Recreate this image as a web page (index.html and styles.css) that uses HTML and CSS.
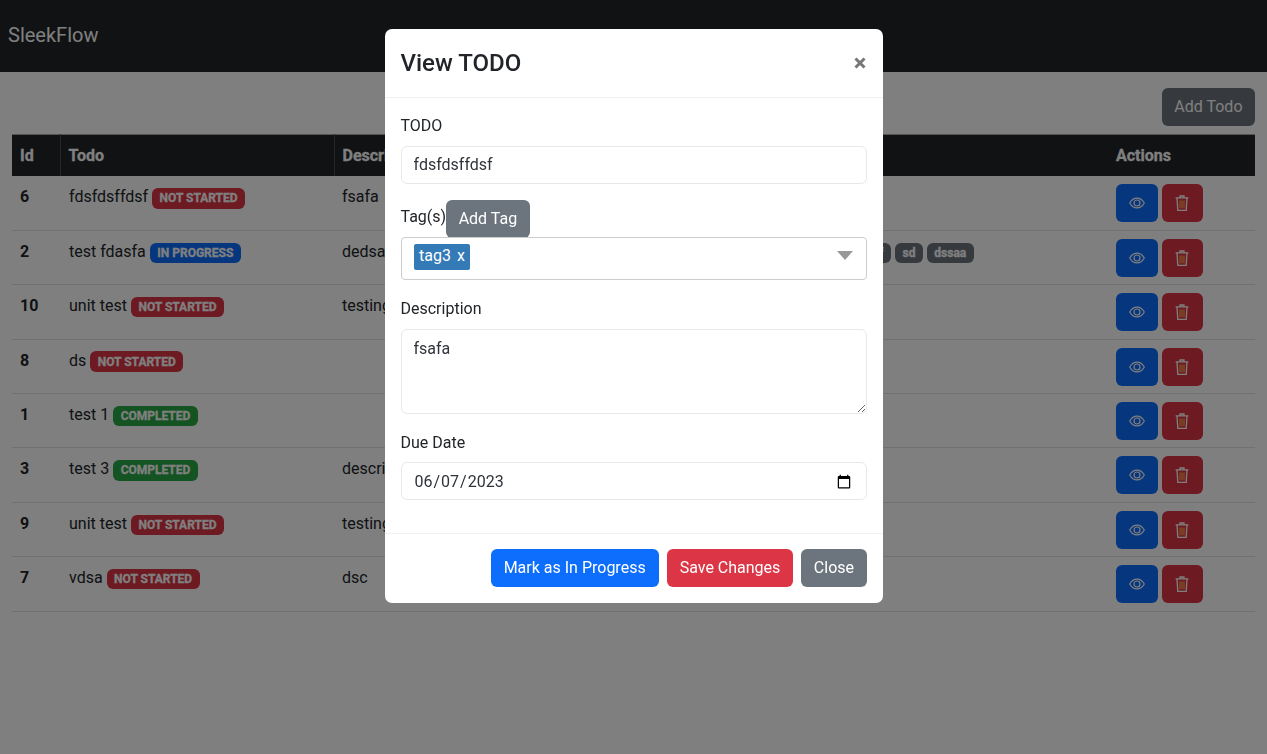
FILE: index.html
```html
<!DOCTYPE html>
<html lang="en">
<head>
  <meta charset="UTF-8" />
  <meta name="viewport" content="width=device-width, initial-scale=1.0" />
  <title>SleekFlow</title>
  <link rel="stylesheet" href="styles.css">
</head>
<body>
  <nav class="navbar"><span class="brand">SleekFlow</span></nav>

  <main class="container">
    <div class="toolbar"><button class="btn btn-gray">Add Todo</button></div>

    <table class="todos">
      <colgroup>
        <col class="col-id"><col class="col-todo"><col class="col-desc"><col class="col-tags"><col class="col-actions">
      </colgroup>
      <thead>
        <tr><th>Id</th><th>Todo</th><th>Description</th><th>Tags</th><th>Actions</th></tr>
      </thead>
      <tbody>
        <tr>
          <td class="num">6</td>
          <td class="name">fdsfdsffdsf <span class="badge red">Not Started</span></td>
          <td>fsafa</td>
          <td><span class="badge gray tag">tag3</span></td>
          <td class="actions">
            <button class="btn btn-blue icon-btn"><svg class="ico-eye" viewBox="0 0 16 12"><use href="#eye"/></svg></button>
            <button class="btn btn-red icon-btn"><svg class="ico-trash" viewBox="0 0 14 16"><use href="#trash"/></svg></button>
          </td>
        </tr>
        <tr>
          <td class="num">2</td>
          <td class="name">test fdasfa <span class="badge blue">In Progress</span></td>
          <td>dedsa</td>
          <td>
            <span class="badge gray tag">tag3</span>
            <span class="badge gray tag">fdsaf</span>
            <span class="badge gray tag">sd</span>
            <span class="badge gray tag">dssaa</span>
          </td>
          <td class="actions">
            <button class="btn btn-blue icon-btn"><svg class="ico-eye" viewBox="0 0 16 12"><use href="#eye"/></svg></button>
            <button class="btn btn-red icon-btn"><svg class="ico-trash" viewBox="0 0 14 16"><use href="#trash"/></svg></button>
          </td>
        </tr>
        <tr>
          <td class="num">10</td>
          <td class="name">unit test <span class="badge red">Not Started</span></td>
          <td>testing</td>
          <td></td>
          <td class="actions">
            <button class="btn btn-blue icon-btn"><svg class="ico-eye" viewBox="0 0 16 12"><use href="#eye"/></svg></button>
            <button class="btn btn-red icon-btn"><svg class="ico-trash" viewBox="0 0 14 16"><use href="#trash"/></svg></button>
          </td>
        </tr>
        <tr>
          <td class="num">8</td>
          <td class="name">ds <span class="badge red">Not Started</span></td>
          <td></td>
          <td></td>
          <td class="actions">
            <button class="btn btn-blue icon-btn"><svg class="ico-eye" viewBox="0 0 16 12"><use href="#eye"/></svg></button>
            <button class="btn btn-red icon-btn"><svg class="ico-trash" viewBox="0 0 14 16"><use href="#trash"/></svg></button>
          </td>
        </tr>
        <tr>
          <td class="num">1</td>
          <td class="name">test 1 <span class="badge green">Completed</span></td>
          <td></td>
          <td></td>
          <td class="actions">
            <button class="btn btn-blue icon-btn"><svg class="ico-eye" viewBox="0 0 16 12"><use href="#eye"/></svg></button>
            <button class="btn btn-red icon-btn"><svg class="ico-trash" viewBox="0 0 14 16"><use href="#trash"/></svg></button>
          </td>
        </tr>
        <tr>
          <td class="num">3</td>
          <td class="name">test 3 <span class="badge green">Completed</span></td>
          <td>description</td>
          <td></td>
          <td class="actions">
            <button class="btn btn-blue icon-btn"><svg class="ico-eye" viewBox="0 0 16 12"><use href="#eye"/></svg></button>
            <button class="btn btn-red icon-btn"><svg class="ico-trash" viewBox="0 0 14 16"><use href="#trash"/></svg></button>
          </td>
        </tr>
        <tr>
          <td class="num">9</td>
          <td class="name">unit test <span class="badge red">Not Started</span></td>
          <td>testing</td>
          <td></td>
          <td class="actions">
            <button class="btn btn-blue icon-btn"><svg class="ico-eye" viewBox="0 0 16 12"><use href="#eye"/></svg></button>
            <button class="btn btn-red icon-btn"><svg class="ico-trash" viewBox="0 0 14 16"><use href="#trash"/></svg></button>
          </td>
        </tr>
        <tr>
          <td class="num">7</td>
          <td class="name">vdsa <span class="badge red">Not Started</span></td>
          <td>dsc</td>
          <td></td>
          <td class="actions">
            <button class="btn btn-blue icon-btn"><svg class="ico-eye" viewBox="0 0 16 12"><use href="#eye"/></svg></button>
            <button class="btn btn-red icon-btn"><svg class="ico-trash" viewBox="0 0 14 16"><use href="#trash"/></svg></button>
          </td>
        </tr>
      </tbody>
    </table>
  </main>

  <div class="backdrop"></div>

  <div class="modal">
    <div class="modal-content">
      <div class="modal-header">
        <h4 class="modal-title">View TODO</h4>
        <svg class="close-x" viewBox="0 0 12 12"><path d="M1.5 1.5l9 9M10.5 1.5l-9 9"/></svg>
      </div>
      <div class="modal-body">
        <div class="field">
          <label class="form-label">TODO</label>
          <input class="form-control todo-input" type="text" value="fdsfdsffdsf">
        </div>
        <div class="field field-tags">
          <div class="tags-head">
            <label class="tags-label">Tag(s)</label>
            <button class="btn btn-gray">Add Tag</button>
          </div>
          <div class="multi-select">
            <span class="chip">tag3<span class="chip-x">x</span></span>
            <span class="caret"></span>
          </div>
        </div>
        <div class="field field-desc">
          <label class="form-label">Description</label>
          <textarea class="form-control" rows="3">fsafa</textarea>
        </div>
        <div class="field field-date">
          <label class="form-label">Due Date</label>
          <input class="form-control date-input" type="date" value="2023-06-07">
        </div>
      </div>
      <div class="modal-footer">
        <button class="btn btn-blue">Mark as In Progress</button>
        <button class="btn btn-red">Save Changes</button>
        <button class="btn btn-gray">Close</button>
      </div>
    </div>
  </div>

  <svg class="sprites" width="0" height="0">
    <symbol id="eye" viewBox="0 0 16 12">
      <path d="M.7 6C2.4 3 5 1.1 8 1.1S13.600 3 15.300 6C13.600 9 11 10.900 8 10.900S2.400 9 .7 6z" fill="none" stroke="#fff" stroke-width="1.200"/>
      <circle cx="8" cy="6" r="3" fill="none" stroke="#fff" stroke-width="1.200"/>
    </symbol>
    <symbol id="trash" viewBox="0 0 14 16">
      <path d="M.6 2.900h12.800M5 2.700V1h4v1.700M2 3l.8 12.400h8.400L12 3" fill="none" stroke="#fff" stroke-width="1.300"/>
      <path d="M5 5.500v7.700M7 5.500v7.700M9 5.500v7.700" fill="none" stroke="#ffb84d" stroke-width="1.100"/>
    </symbol>
  </svg>
</body>
</html>
```

FILE: styles.css
```css
:root {
  --dark: #212529;
  --gray: #6c757d;
  --blue: #0d6efd;
  --red: #dc3545;
  --green: #28a745;
  --line: #dee2e6;
}

* {
  box-sizing: border-box;
}

body {
  margin: 0;
  font-family: Roboto, "Liberation Sans", sans-serif;
  font-size: 16px;
  line-height: 1.5;
  color: var(--dark);
  background: #fff;
}

.navbar {
  height: 72px;
  background: var(--dark);
  display: flex;
  align-items: center;
  padding: 0 0 2px 8px;
}

.brand {
  font-size: 20px;
  color: #fff;
}

.container {
  padding: 16.4px 12px 0;
}

.toolbar {
  display: flex;
  justify-content: flex-end;
  margin-bottom: 7.6px;
}

.btn {
  display: inline-block;
  height: 38px;
  padding: 6px 12px;
  border: 1px solid transparent;
  border-radius: 6px;
  font: inherit;
  color: #fff;
  vertical-align: middle;
}

.btn-gray {
  background: var(--gray);
  padding-left: 11.5px;
  padding-right: 11.5px;
}

.btn-blue { background: var(--blue); }
.btn-red { background: var(--red); }

.icon-btn {
  width: 42px;
  display: inline-flex;
  align-items: center;
  justify-content: center;
  padding: 0;
}

.btn-red.icon-btn {
  width: 41px;
}

.ico-eye {
  width: 16px;
  height: 12px;
}

.ico-trash {
  width: 14px;
  height: 16px;
}

.todos {
  width: 100%;
  table-layout: fixed;
  border-collapse: collapse;
}

.col-id { width: 48px; }
.col-todo { width: 274px; }
.col-desc { width: 463px; }
.col-actions { width: 147px; }

th, td {
  text-align: left;
  vertical-align: top;
  white-space: nowrap;
}

th {
  height: 42px;
  padding: 9px 8px 7px;
  background: var(--dark);
  color: #fff;
  -webkit-text-stroke: 0.3px #fff;
  border: 1px solid #4d5154;
  border-top-color: #a6a8aa;
  border-bottom: 0;
}

th:first-child { border-left: 0; }
th:last-child { border-left: 0; border-right: 0; }
th:nth-child(4) { border-right: 0; }

td {
  padding: 9px 8px 6.4px;
  border-bottom: 1px solid var(--line);
}

td.actions {
  padding: 8px 8px 7.4px;
}

td.name {
  padding-left: 9px;
}

.num {
  font-weight: 700;
}

.badge {
  display: inline-block;
  padding: 4.2px 7.5px;
  border-radius: 6px;
  font-size: 12px;
  font-weight: 700;
  line-height: 1;
  color: #fff;
  -webkit-text-stroke: 0.3px #fff;
  text-transform: uppercase;
}

.badge.tag { text-transform: none; }
.red { background: var(--red); }
.blue { background: var(--blue); }
.green { background: var(--green); }
.gray { background: var(--gray); }

.backdrop {
  position: fixed;
  inset: 0;
  background: rgba(0, 0, 0, 0.5);
}

.modal {
  position: fixed;
  inset: 0;
  display: flex;
  justify-content: center;
  align-items: flex-start;
  padding-top: 28px;
}

.modal-content {
  width: 500px;
  background: #fff;
  background-clip: padding-box;
  border: 1px solid transparent;
  border-radius: 8px;
}

.modal-header {
  display: flex;
  align-items: center;
  justify-content: space-between;
  padding: 16px;
  border-bottom: 1px solid #eef0f2;
}

.modal-title {
  margin: 0;
  font-size: 24px;
  font-weight: 500;
  line-height: 1.5;
}

.close-x {
  width: 12px;
  height: 12px;
  margin-right: 1px;
  fill: none;
  stroke: #777;
  stroke-width: 3;
}

.modal-body {
  padding: 16px;
}

.field {
  margin-bottom: 16px;
}

.field-tags,
.field-desc,
.field-date {
  margin-bottom: 17px;
}

.field-date .form-label {
  margin-bottom: 7px;
}

.form-label {
  display: block;
  margin-bottom: 8px;
}

.form-control {
  display: block;
  width: 100%;
  padding: 7px 12px 5px;
  border: 1px solid #e6e9ec;
  border-radius: 6px;
  font: inherit;
  color: #2f343a;
  background: #fff;
}

input.form-control {
  height: 38px;
}

textarea.form-control {
  height: 85px;
}

.todo-input {
  padding: 5px 12px 7px;
}

.date-input {
  padding: 7px 12px 5px;
}

.tags-head {
  display: flex;
  align-items: flex-start;
  height: 37px;
}

.tags-label {
  padding-top: 5px;
}

.multi-select {
  position: relative;
  display: flex;
  align-items: flex-start;
  height: 43px;
  padding: 6px 0 0 12px;
  border: 1px solid #cccccc;
  border-radius: 4px;
}

.chip {
  display: inline-flex;
  align-items: center;
  height: 26px;
  padding: 0 5.5px 2px;
  border-radius: 2px;
  background: #337ab7;
  color: #fff;
}

.chip-x {
  margin-left: 6px;
}

.caret {
  position: absolute;
  right: 13px;
  top: 13px;
  border-style: solid;
  border-width: 9px 8px 0;
  border-color: #999 transparent transparent;
}

.modal-footer {
  display: flex;
  justify-content: flex-end;
  gap: 8px;
  padding: 15px 16px 16px;
  border-top: 1px solid #eef0f2;
}

.sprites {
  position: absolute;
}
```
